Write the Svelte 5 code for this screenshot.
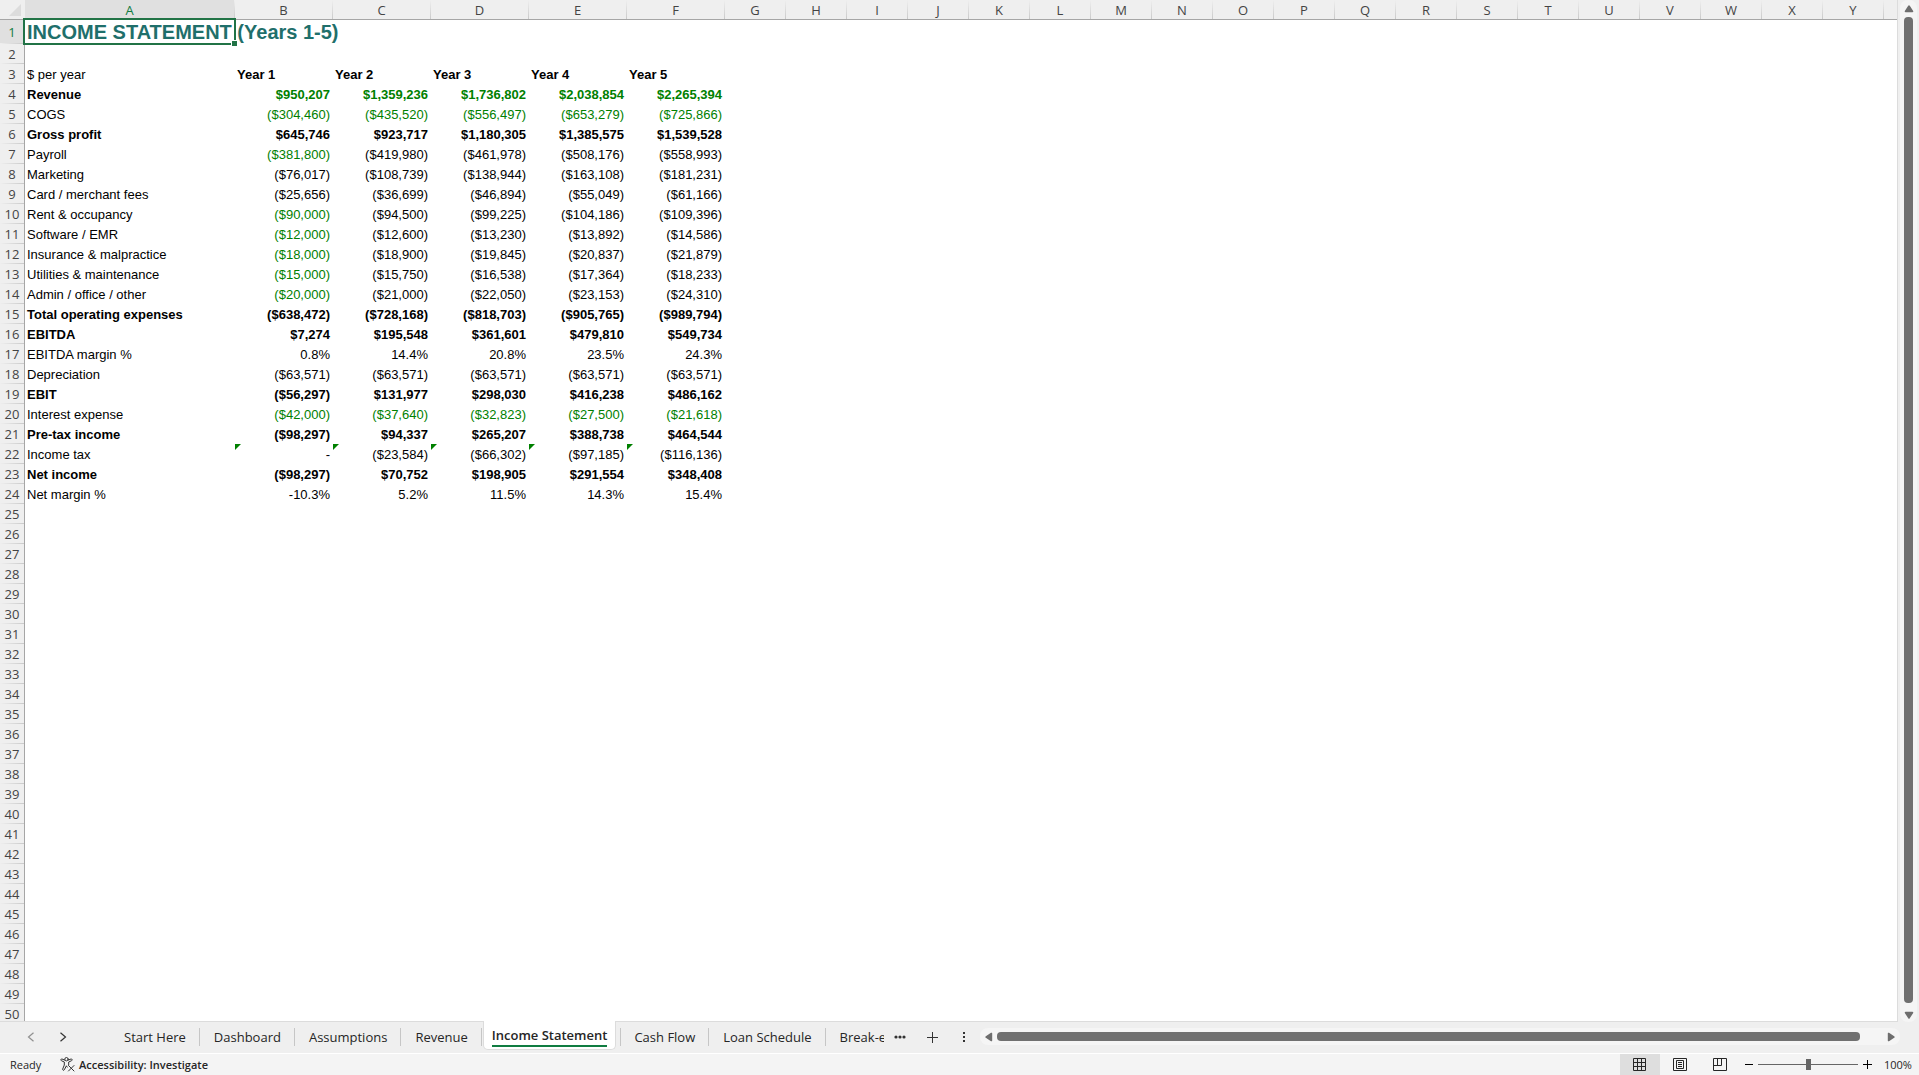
<script>
  const letters = 'ABCDEFGHIJKLMNOPQRSTUVWXY'.split('');
  const years = ['Year 1', 'Year 2', 'Year 3', 'Year 4', 'Year 5'];

  // link: 'all' = every value comes from another sheet, 'first' = only year 1
  const lines = [
    { label: 'Revenue', bold: true, link: 'all', values: ['$950,207', '$1,359,236', '$1,736,802', '$2,038,854', '$2,265,394'] },
    { label: 'COGS', link: 'all', values: ['($304,460)', '($435,520)', '($556,497)', '($653,279)', '($725,866)'] },
    { label: 'Gross profit', bold: true, values: ['$645,746', '$923,717', '$1,180,305', '$1,385,575', '$1,539,528'] },
    { label: 'Payroll', link: 'first', values: ['($381,800)', '($419,980)', '($461,978)', '($508,176)', '($558,993)'] },
    { label: 'Marketing', values: ['($76,017)', '($108,739)', '($138,944)', '($163,108)', '($181,231)'] },
    { label: 'Card / merchant fees', values: ['($25,656)', '($36,699)', '($46,894)', '($55,049)', '($61,166)'] },
    { label: 'Rent & occupancy', link: 'first', values: ['($90,000)', '($94,500)', '($99,225)', '($104,186)', '($109,396)'] },
    { label: 'Software / EMR', link: 'first', values: ['($12,000)', '($12,600)', '($13,230)', '($13,892)', '($14,586)'] },
    { label: 'Insurance & malpractice', link: 'first', values: ['($18,000)', '($18,900)', '($19,845)', '($20,837)', '($21,879)'] },
    { label: 'Utilities & maintenance', link: 'first', values: ['($15,000)', '($15,750)', '($16,538)', '($17,364)', '($18,233)'] },
    { label: 'Admin / office / other', link: 'first', values: ['($20,000)', '($21,000)', '($22,050)', '($23,153)', '($24,310)'] },
    { label: 'Total operating expenses', bold: true, values: ['($638,472)', '($728,168)', '($818,703)', '($905,765)', '($989,794)'] },
    { label: 'EBITDA', bold: true, values: ['$7,274', '$195,548', '$361,601', '$479,810', '$549,734'] },
    { label: 'EBITDA margin %', values: ['0.8%', '14.4%', '20.8%', '23.5%', '24.3%'] },
    { label: 'Depreciation', values: ['($63,571)', '($63,571)', '($63,571)', '($63,571)', '($63,571)'] },
    { label: 'EBIT', bold: true, values: ['($56,297)', '$131,977', '$298,030', '$416,238', '$486,162'] },
    { label: 'Interest expense', link: 'all', values: ['($42,000)', '($37,640)', '($32,823)', '($27,500)', '($21,618)'] },
    { label: 'Pre-tax income', bold: true, values: ['($98,297)', '$94,337', '$265,207', '$388,738', '$464,544'] },
    { label: 'Income tax', flag: true, values: ['-', '($23,584)', '($66,302)', '($97,185)', '($116,136)'] },
    { label: 'Net income', bold: true, values: ['($98,297)', '$70,752', '$198,905', '$291,554', '$348,408'] },
    { label: 'Net margin %', values: ['-10.3%', '5.2%', '11.5%', '14.3%', '15.4%'] }
  ];

  const firstLine = 4;
  const lastRow = 50;
  const emptyRows = Array.from(
    { length: lastRow - firstLine - lines.length + 1 },
    (_, i) => firstLine + lines.length + i
  );

  const sheets = ['Start Here', 'Dashboard', 'Assumptions', 'Revenue', 'Income Statement', 'Cash Flow', 'Loan Schedule', 'Break-even'];
  let active = 'Income Statement';
  let zoom = 100;
  let view = 'Normal';
</script>

<div class="app">
  <div class="workspace">
    <main class="pane">
      <table>
        <colgroup>
          <col class="col-rows" />
          <col class="col-label" />
          {#each years as _}<col class="col-year" />{/each}
          {#each letters.slice(6) as _}<col class="col-std" />{/each}
          <col />
        </colgroup>
        <thead>
          <tr>
            <td class="corner"><svg width="12" height="12" viewBox="0 0 12 12"><path d="M12 0v12H0z" fill="#dcdcdc" /></svg></td>
            {#each letters as letter}
              <th scope="col" class:current={letter === 'A'}>{letter}</th>
            {/each}
            <td class="rest"></td>
          </tr>
        </thead>
        <tbody>
          <tr class="title-row">
            <th scope="row" class="current">1</th>
            <td class="title">INCOME STATEMENT (Years 1-5)<span class="selection"></span></td>
          </tr>
          <tr><th scope="row">2</th></tr>
          <tr>
            <th scope="row">3</th>
            <td>$ per year</td>
            {#each years as year}<td class="bold">{year}</td>{/each}
          </tr>
          {#each lines as line, i}
            <tr class:bold={line.bold}>
              <th scope="row">{firstLine + i}</th>
              <td>{line.label}</td>
              {#each line.values as value, y}
                <td
                  class="num"
                  class:link={line.link === 'all' || (line.link === 'first' && y === 0)}
                  class:flag={line.flag}>{value}</td>
              {/each}
            </tr>
          {/each}
          {#each emptyRows as n}
            <tr><th scope="row">{n}</th></tr>
          {/each}
        </tbody>
      </table>
    </main>

    <div class="vscroll">
      <button aria-label="Scroll up"><svg width="10" height="8" viewBox="0 0 10 8"><path d="M4.2.8a1 1 0 0 1 1.6 0L9.2 6a.8.8 0 0 1-.7 1.2h-7A.8.8 0 0 1 .8 6z" /></svg></button>
      <div class="vthumb"></div>
      <button aria-label="Scroll down"><svg width="10" height="8" viewBox="0 0 10 8"><path d="M4.2 7.2a1 1 0 0 0 1.6 0L9.2 2A.8.8 0 0 0 8.5.8h-7A.8.8 0 0 0 .8 2z" /></svg></button>
    </div>
  </div>

  <div class="sheet-bar">
    <div class="arrows">
      <button class="dim" aria-label="Previous sheet"><svg width="8" height="10" viewBox="0 0 8 10"><path d="M6.5.7 1.500 5l5 4.300" /></svg></button>
      <button aria-label="Next sheet"><svg width="8" height="10" viewBox="0 0 8 10"><path d="M1.500.7 6.500 5l-5 4.300" /></svg></button>
    </div>
    <nav class="tabs">
      {#each sheets as sheet}
        <button class="tab" class:active={sheet === active} on:click={() => (active = sheet)}>
          <span>{sheet}</span>
        </button>
      {/each}
    </nav>
    <button class="tool more" aria-label="More sheets"><svg width="12" height="4" viewBox="0 0 12 4"><circle cx="2" cy="2" r="1.6" /><circle cx="6" cy="2" r="1.6" /><circle cx="10" cy="2" r="1.6" /></svg></button>
    <button class="tool" aria-label="New sheet"><svg width="11" height="11" viewBox="0 0 11 11"><path d="M5 0h1v5h5v1H6v5H5V6H0V5h5z" /></svg></button>
    <button class="tool grip" aria-label="Resize tabs"><svg width="2" height="10" viewBox="0 0 2 10"><path d="M0 0h2v2H0zM0 4h2v2H0zM0 8h2v2H0z" /></svg></button>
    <div class="hscroll">
      <button aria-label="Scroll left"><svg width="8" height="10" viewBox="0 0 8 10"><path d="M.8 4.200a1 1 0 0 0 0 1.600L6 9.200a.8.8 0 0 0 1.200-.7v-7A.8.8 0 0 0 6 .8z" /></svg></button>
      <div class="hthumb"></div>
      <button aria-label="Scroll right"><svg width="8" height="10" viewBox="0 0 8 10"><path d="M7.200 4.200a1 1 0 0 1 0 1.600L2 9.200a.8.8 0 0 1-1.200-.7v-7A.8.8 0 0 1 2 .8z" /></svg></button>
    </div>
  </div>

  <footer class="status">
    <span class="ready">Ready</span>
    <button class="access">
      <svg width="15" height="15" viewBox="0 0 15 15" fill="none" stroke="#333" stroke-linecap="round" stroke-linejoin="round">
        <circle cx="6.5" cy="2.2" r="1.7" />
        <path d="M4.800 3.100 2 2C.8 1.700.4 3.200 1.400 3.700L4.300 5v3L2.700 12c-.4 1.300 1 1.800 1.600.8l2.100-4 .8 1.300M8.200 3.100 11 2c1.200-.3 1.600 1.200.6 1.700L8.700 5v2.700M8.500 8.500l5.500 5.500M14 8.500 8.500 14" />
      </svg>
      Accessibility: Investigate
    </button>
    <div class="views">
      <button class:on={view === 'Normal'} aria-label="Normal" on:click={() => (view = 'Normal')}>
        <svg width="14" height="14" viewBox="0 0 14 14"><path d="M.5.5h12v12H.5zM4.500.5v12M8.500.5v12M.5 4.500h12M.5 8.500h12" /></svg>
      </button>
      <button class:on={view === 'Layout'} aria-label="Page layout" on:click={() => (view = 'Layout')}>
        <svg width="14" height="14" viewBox="0 0 14 14"><path d="M.5.5h13v12H.5zM3.500 2.500h7v8h-7zM5 4.500h4M5 6.500h4M5 8.500h4" /></svg>
      </button>
      <button class:on={view === 'Breaks'} aria-label="Page break preview" on:click={() => (view = 'Breaks')}>
        <svg width="14" height="14" viewBox="0 0 14 14"><path d="M.5.5h13v12H.5zM.5 7.500h8v-7M4.500.5v7" /></svg>
      </button>
    </div>
    <button class="step" aria-label="Zoom out" on:click={() => (zoom -= 10)}><svg width="9" height="9" viewBox="0 0 9 9"><path d="M0 4h8v1H0z" /></svg></button>
    <input type="range" min="0" max="200" bind:value={zoom} aria-label="Zoom" />
    <button class="step" aria-label="Zoom in" on:click={() => (zoom += 10)}><svg width="9" height="9" viewBox="0 0 9 9"><path d="M4 0h1v4h4v1H5v4H4V5H0V4h4z" /></svg></button>
    <span class="percent">{zoom}%</span>
  </footer>
</div>

<style>
  :global(body) { margin: 0; overflow: hidden; }
  .app { display: flex; flex-direction: column; height: 100vh; background: #efefef; color: #262626; font-family: 'Open Sans', 'Noto Sans', sans-serif; font-size: 13px; }
  button { display: flex; align-items: center; justify-content: center; margin: 0; padding: 0; border: none; background: none; color: inherit; font: inherit; cursor: pointer; }

  .workspace { flex: 1; min-height: 0; display: flex; }
  .pane { flex: 1; min-width: 0; overflow: hidden; background: #fff; border-right: 1px solid #dcdcdc; border-bottom: 1px solid #dcdcdc; }

  table { width: 100%; table-layout: fixed; border-collapse: separate; border-spacing: 0; font-family: 'Liberation Sans', Arial, sans-serif; color: #000; }
  .col-rows { width: 25px; }
  .col-label { width: 210px; }
  .col-year { width: 98px; }
  .col-std { width: 61px; }
  tr { height: 20px; }
  .title-row { height: 24px; }
  th, td { box-sizing: border-box; padding: 0; line-height: 18px; white-space: nowrap; }
  th { color: #444; font-family: 'Open Sans', 'Noto Sans', sans-serif; font-weight: 400; font-size: 13px; text-align: center; }
  thead th, thead td { height: 20px; padding-right: 1px; border-bottom: 1px solid #a6a6a6; background: linear-gradient(#efefef, #cacaca) right / 1px 100% no-repeat #efefef; }
  thead .corner { padding-right: 4px; background: #efefef; }
  .corner svg { display: block; margin-left: auto; }
  thead .rest { background: #efefef; }
  tbody th { border-right: 1px solid #a6a6a6; background: linear-gradient(90deg, #efefef, #cacaca) bottom / 100% 1px no-repeat #efefef; }
  thead .current, tbody .current { background-color: #e0e0e0; color: #107c41; }

  tbody td { position: relative; padding: 2px 3px 0 2px; font-size: 13px; vertical-align: middle; }
  .bold { font-weight: 700; }
  .num { text-align: right; }
  .link { color: #008000; }
  .flag::before { content: ''; position: absolute; left: 0; top: 0; border-top: 6px solid #008000; border-right: 6px solid transparent; }
  tbody .title { padding-top: 1px; color: #1f6f6b; font-size: 20px; font-weight: 700; line-height: 23px; }
  .selection { position: absolute; inset: -2px -1px -1px -2px; border: 2px solid #217346; }
  .selection::after { content: ''; position: absolute; right: -3px; bottom: -3px; width: 5px; height: 5px; background: #217346; border: solid #fff; border-width: 1px 0 0 1px; }

  .vscroll { display: flex; flex-direction: column; align-items: center; width: 17px; margin: 0 2px; padding: 5px 0 3px; box-sizing: border-box; border-radius: 8px; background: #f5f5f5; fill: #6e6e6e; }
  .vthumb { flex: 1; width: 9px; margin: 4px 0 8px; border-radius: 4px; background: #707070; }

  .sheet-bar { display: flex; align-items: flex-start; height: 31px; border-bottom: 1px solid #fff; }
  .arrows { display: flex; gap: 24px; width: 84px; height: 30px; padding-left: 27px; box-sizing: border-box; }
  .arrows svg { fill: none; stroke: #333; stroke-width: 1.2; }
  .arrows .dim { opacity: 0.5; }
  .tabs { display: flex; width: 800px; margin-top: -1px; padding-left: 26px; box-sizing: border-box; overflow: hidden; }
  .tab { position: relative; flex: none; height: 31px; padding: 0 14px; }
  .tab:not(.active)::after, .tab.active + .tab::before { content: ''; position: absolute; right: 0; top: 7px; width: 1px; height: 18px; background: #c6c6c6; }
  .tab.active + .tab::before { left: 0; right: auto; }
  .tab.active { height: 29px; margin: 0 4px 0 1px; padding: 0 8px; box-sizing: border-box; border: solid #dcdcdc; border-width: 0 1px 1px; border-radius: 0 0 5px 5px; background: #fff; font-weight: 600; }
  .tab.active span { height: 20px; line-height: 20px; margin-top: 2px; border-bottom: 2px solid #107c41; }
  .tool { width: 32px; height: 30px; fill: #333; }
  .hscroll { flex: 1; display: flex; align-items: center; height: 17px; margin: 6px 19px 0 0; padding: 0 5px; border-radius: 8px; background: #f5f5f5; fill: #6e6e6e; }
  .hthumb { flex: 1; height: 9px; margin: 0 27px 0 4px; border-radius: 4px; background: #707070; }

  .status { display: flex; align-items: center; height: 21px; background: #f4f4f4; font-size: 11px; }
  .ready { width: 50px; padding-left: 10px; }
  .access { gap: 4px; font-weight: 600; }
  .views { display: flex; margin-left: auto; }
  .views button { width: 40px; height: 21px; }
  .views .on { background: #dedede; }
  .views svg { fill: none; stroke: #262626; }
  .step { width: 18px; height: 21px; }
  input { width: 100px; height: 21px; margin: 0; appearance: none; background: linear-gradient(#666, #666) center / 100% 1px no-repeat; }
  input::-webkit-slider-thumb { appearance: none; width: 5px; height: 11px; background: #666; }
  .percent { width: 43px; padding-left: 8px; box-sizing: border-box; }
</style>
